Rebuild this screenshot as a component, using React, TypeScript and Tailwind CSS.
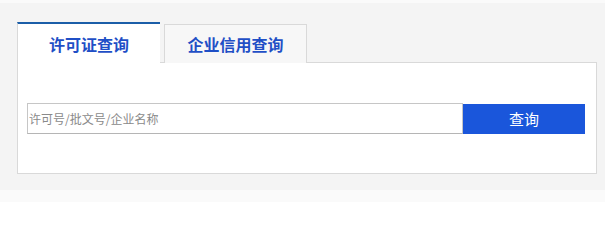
export default function App() {
  const font = { fontFamily: '"Microsoft YaHei", "Noto Sans CJK SC", sans-serif' };

  return (
    <div className="w-[605px] h-[202px] overflow-hidden bg-[#f4f4f4] flex flex-col" style={font}>
      <div className="h-[3px] bg-[#fafafa]" />
      <div className="flex-1 pl-[17px] pt-[19px]">
        {/* tabs */}
        <div className="flex items-end gap-[4px] relative z-10 -mb-px">
          <div className="w-[143px] h-[41px] bg-white border-t-2 border-l border-t-[#1b5ea8] border-l-[#d9d9d9] flex items-center justify-center text-[16px] font-bold text-[#1f4fc6]">
            许可证查询
          </div>
          <div className="w-[143px] h-[39px] bg-[#f7f7f7] border border-b-0 border-[#d9d9d9] flex items-center justify-center text-[16px] font-bold text-[#1f4fc6]">
            企业信用查询
          </div>
        </div>

        {/* panel */}
        <div className="w-[580px] h-[112px] bg-white border border-[#d9d9d9] pl-[9px] pt-[40px]">
          <div className="flex items-start">
            <input
              className="w-[436px] h-[31px] border border-[#c6c6c6] border-b-[#b5b5b5] px-px text-[12px] text-[#333] placeholder:text-[#8a8a8a] outline-none"
              placeholder="许可号/批文号/企业名称"
            />
            <button className="w-[122px] h-[30px] mt-px bg-[#1a56db] text-white text-[15px] flex items-center justify-center">
              查询
            </button>
          </div>
        </div>
      </div>
      <div className="h-[12px] bg-[#fafafa]" />
    </div>
  );
}
